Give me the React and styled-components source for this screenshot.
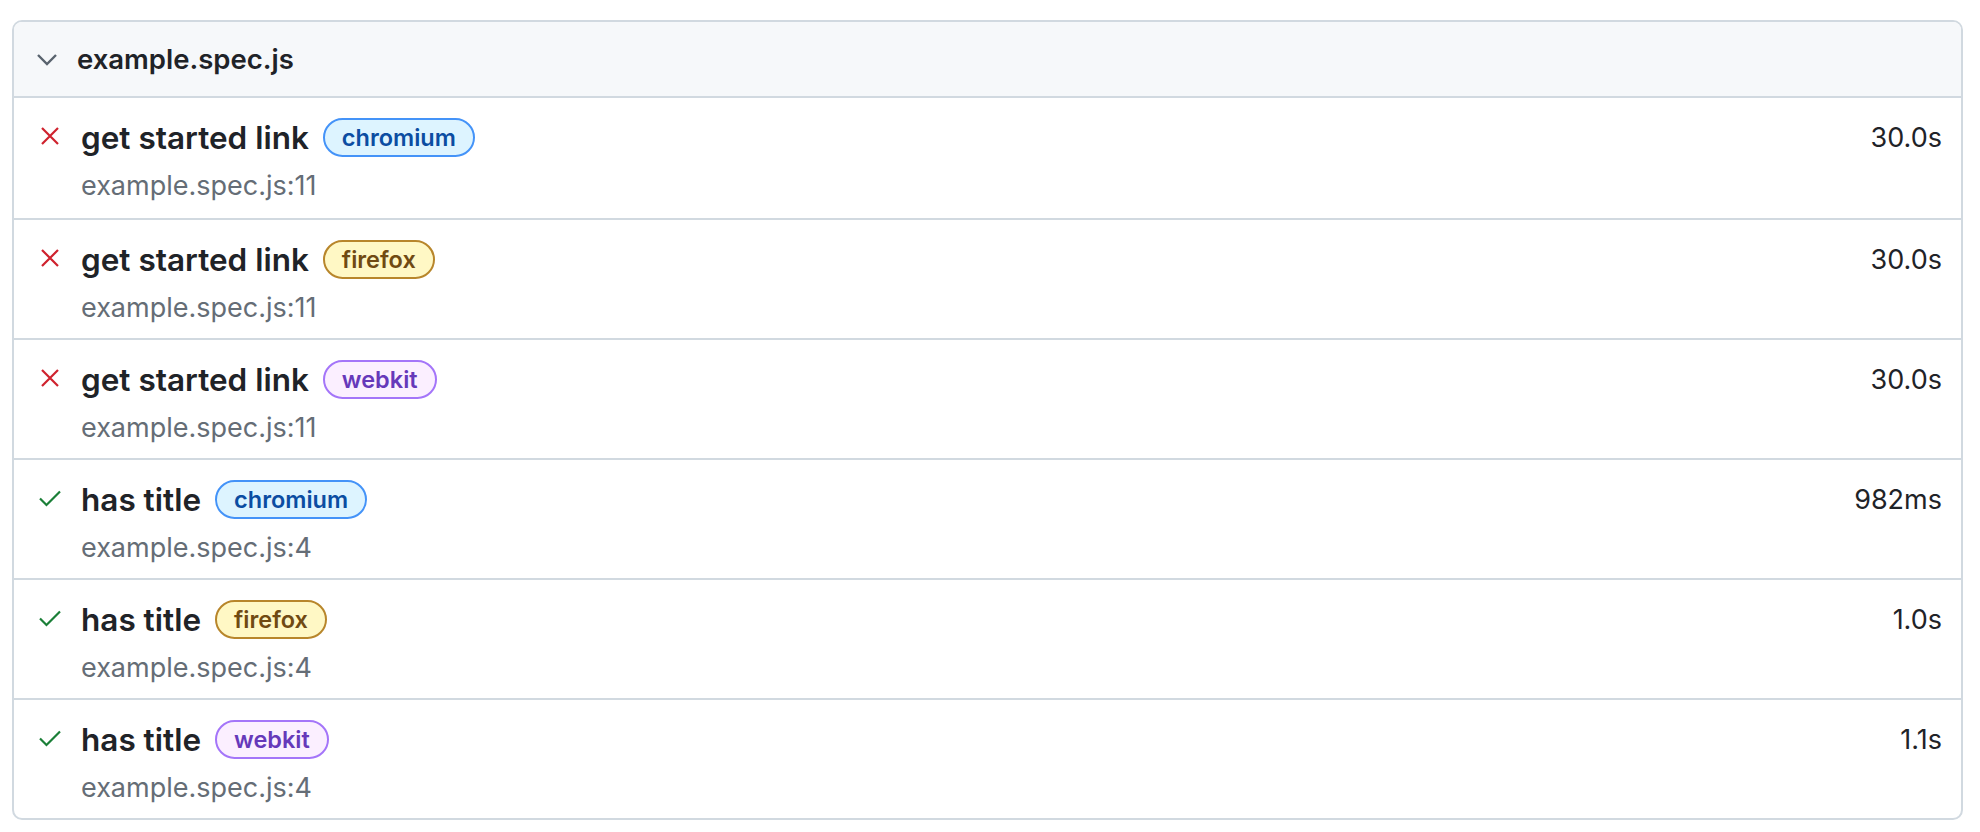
import React from 'react';
import styled, { createGlobalStyle } from 'styled-components';

const GlobalStyle = createGlobalStyle`
  body {
    margin: 0;
    background: #ffffff;
    font-family: Inter, "Noto Sans", "Liberation Sans", sans-serif;
    color: #1f2328;
  }
`;

const Page = styled.div`
  padding: 20px 17px 14px 12px;
`;

const Panel = styled.div`
  border: 2px solid #d1d9e0;
  border-radius: 10px;
  overflow: hidden;
`;

const Header = styled.div`
  display: flex;
  align-items: center;
  height: 76px;
  padding-left: 22px;
  background: #f6f8fa;
  border-bottom: 2px solid #d1d9e0;
  box-sizing: border-box;
`;

const Chevron = styled.svg`
  width: 22px;
  height: 22px;
  margin-right: 19px;
  color: #59636e;
`;

const FileName = styled.span`
  font-size: 27.5px;
  font-weight: 600;
`;

const Row = styled.div`
  display: flex;
  align-items: flex-start;
  height: 120px;
  box-sizing: border-box;
  padding: 20px 19px 0 24px;
  border-top: ${(p) => (p.$first ? 'none' : '2px solid #d1d9e0')};
`;

const StatusIcon = styled.svg`
  flex: none;
  width: 24px;
  height: 24px;
  margin-top: 6px;
  margin-right: 19px;
  color: ${(p) => (p.$ok ? '#1a7f37' : '#cf222e')};
`;

const Body = styled.div`
  flex: 1;
  display: flex;
  flex-direction: column;
`;

const TitleLine = styled.div`
  display: flex;
  align-items: center;
  gap: 14px;
  height: 39px;
`;

const Title = styled.span`
  font-size: 31.5px;
  font-weight: 600;
`;

const badgeColors = {
  chromium: { bg: '#ddf4ff', border: '#4493f8', fg: '#0b4da2' },
  firefox: { bg: '#fff8c5', border: '#b8862b', fg: '#704a12' },
  webkit: { bg: '#fbefff', border: '#a475f9', fg: '#6639ba' },
};

const Badge = styled.span`
  display: inline-flex;
  align-items: center;
  height: 39px;
  box-sizing: border-box;
  padding: 0 17px;
  border-radius: 20px;
  border: 2px solid ${(p) => badgeColors[p.$kind].border};
  background: ${(p) => badgeColors[p.$kind].bg};
  color: ${(p) => badgeColors[p.$kind].fg};
  font-size: 23.5px;
  font-weight: 600;
`;

const Location = styled.span`
  margin-top: 13px;
  font-size: 27px;
  color: #656d76;
  line-height: 32px;
`;

const Duration = styled.span`
  flex: none;
  line-height: 39px;
  font-size: 27px;
  color: #1f2328;
`;

const tests = [
  { ok: false, title: 'get started link', project: 'chromium', loc: 'example.spec.js:11', time: '30.0s' },
  { ok: false, title: 'get started link', project: 'firefox', loc: 'example.spec.js:11', time: '30.0s' },
  { ok: false, title: 'get started link', project: 'webkit', loc: 'example.spec.js:11', time: '30.0s' },
  { ok: true, title: 'has title', project: 'chromium', loc: 'example.spec.js:4', time: '982ms' },
  { ok: true, title: 'has title', project: 'firefox', loc: 'example.spec.js:4', time: '1.0s' },
  { ok: true, title: 'has title', project: 'webkit', loc: 'example.spec.js:4', time: '1.1s' },
];

const Icon = ({ ok }) => (
  <StatusIcon $ok={ok} viewBox="0 0 24 24" fill="none" stroke="currentColor" strokeWidth="2.2">
    {ok ? <path d="M2 12.5l6.5 6.5L22 5.5" /> : <path d="M4 4l16 16M20 4L4 20" />}
  </StatusIcon>
);

export default function App() {
  return (
    <>
      <GlobalStyle />
      <Page>
        <Panel>
          <Header>
            <Chevron viewBox="0 0 22 22" fill="none" stroke="currentColor" strokeWidth="2.4">
              <path d="M2 7l9 9 9-9" />
            </Chevron>
            <FileName>example.spec.js</FileName>
          </Header>
          {tests.map((t, i) => (
            <Row key={i} $first={i === 0}>
              <Icon ok={t.ok} />
              <Body>
                <TitleLine>
                  <Title>{t.title}</Title>
                  <Badge $kind={t.project}>{t.project}</Badge>
                </TitleLine>
                <Location>{t.loc}</Location>
              </Body>
              <Duration>{t.time}</Duration>
            </Row>
          ))}
        </Panel>
      </Page>
    </>
  );
}
